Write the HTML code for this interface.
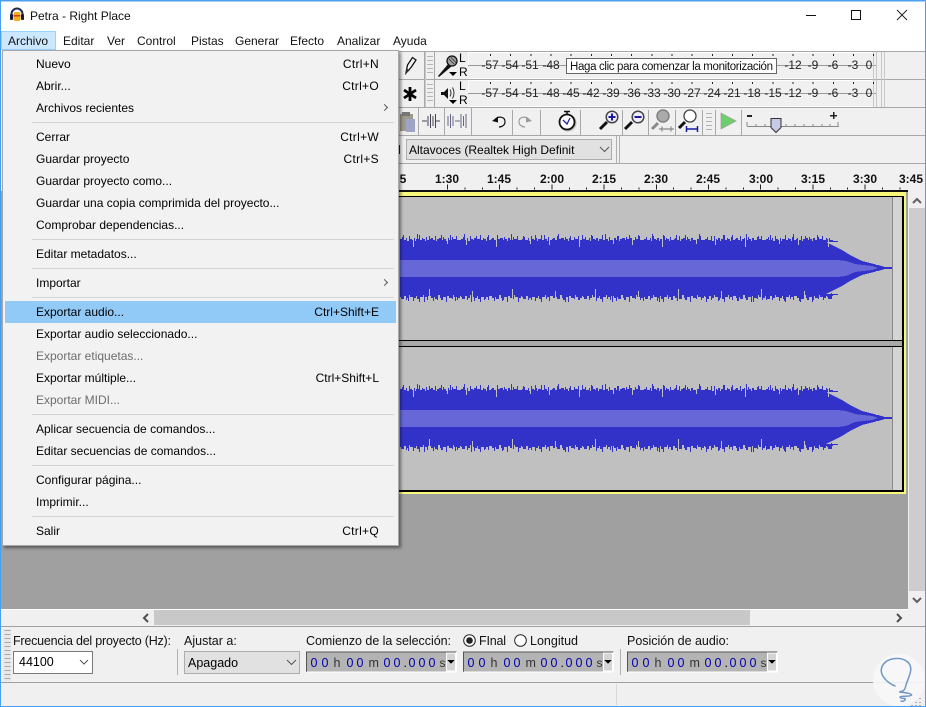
<!DOCTYPE html>
<html lang="es"><head><meta charset="utf-8"><title>Petra - Right Place</title>
<style>
html,body{margin:0;padding:0;background:#f0f0f0}
#w{position:relative;width:926px;height:707px;overflow:hidden;font:12px "Liberation Sans",sans-serif;color:#000}
svg{position:absolute;left:0;top:0}
svg text{font-family:"Liberation Sans",sans-serif}
#m{position:absolute;left:2px;top:50px;width:395px;height:494px;background:#f2f2f2;border:1px solid #a8a8a8;box-shadow:2px 2px 3px rgba(0,0,0,.45)}
#m div{position:absolute;left:1px;width:392px;height:22px;line-height:22px;white-space:nowrap}
#m span{position:absolute;left:32px;top:0}
#m b{position:absolute;right:17px;top:0;font-weight:normal}
#m b.l{letter-spacing:.3px}
#m i{position:absolute;left:29px;width:362px;height:1px;background:#d4d4d4}
#m .g{color:#6d6d6d}
#m .h{background:#91c9f7}
#m u{position:absolute;right:9px;top:8px;width:4px;height:4px;border:solid #555;border-width:1px 1px 0 0;transform:rotate(45deg)}
</style></head><body><div id="w">
<svg width="926" height="707" viewBox="0 0 926 707" shape-rendering="crispEdges">
<defs>
<clipPath id="env"><polygon points="400,-35 815,-35 815,-33 826,-33 826,-30 833,-30 833,-27 838,-27 838,-22 842,-22 842,-18 846,-18 846,-19 849,-19 849,-15 853,-15 853,-13 857,-13 857,-10 861,-10 861,-8 866,-8 866,-7 871,-7 871,-5 876,-5 876,-3 881,-3 881,-2 886,-2 886,-1 892,-1 892,1 886,1 886,2 881,2 881,3 876,3 876,5 871,5 871,7 866,7 866,9 861,9 861,11 857,11 857,14 853,14 853,16 849,16 849,20 846,20 846,18 842,18 842,23 838,23 838,27 833,27 833,31 826,31 826,33 815,33 815,35 400,35"/></clipPath>
<pattern id="pa" patternUnits="userSpaceOnUse" x="400" y="-35" width="61" height="70">
<path fill="#3232c8" d="M0 9V6h2V4h1V7h3V5h1V8h2V3h1V6h2V7h1V5h2V8h1V6h3V2h1V7h2V5h1V6h2V8h1V4h1V7h3V6h1V5h2V7h2V3h1V8h1V6h2V5h3V7h1V4h1V6h2V8h1V5h2V7h3V4h1V6h3V3h1V7h4V9H0Z"/>
<path fill="#3232c8" d="M0 61V64h1V66h3V63h2V67h1V65h2V62h1V64h3V68h1V65h2V63h1V66h2V69h1V64h3V62h1V66h1V64h2V67h1V63h3V65h2V68h1V64h1V66h3V62h2V65h1V67h2V64h3V69h1V63h2V65h3V66h1V62h1V64h3V67h1V65h2V63h1V61H0Z"/>
</pattern>
<pattern id="pb" patternUnits="userSpaceOnUse" x="400" y="-35" width="47" height="70">
<path fill="none" stroke="#3232c8" d="M3.500 2v8M17.500 1v8M29.500 3v7M41.500 2v7M8.500 60v8M24.500 60v9M37.500 60v7"/>
</pattern>
<pattern id="pc" patternUnits="userSpaceOnUse" x="400" y="-35" width="83" height="70">
<path fill="none" stroke="#c0c0c0" d="M13.500 0v14M47.500 0v11M66.500 0v12M29.500 56v14M72.500 58v12"/>
</pattern>
<g id="wave" clip-path="url(#env)">
<polygon fill="#3232c8" points="400,-26 826,-26 832,-23 842,-18 850,-13 856,-10 862,-7 870,-5 878,-3 885,-1 892,-1 892,1 885,1 878,3 870,5 862,7 856,10 850,13 842,18 832,23 826,26 400,26"/>
<rect x="400" y="-35" width="492" height="70" fill="url(#pa)"/>
<rect x="400" y="-35" width="492" height="70" fill="url(#pb)"/>
<rect x="400" y="-35" width="435" height="70" fill="url(#pc)"/>
<polygon fill="#6767d8" points="400,-8 838,-8 846,-7 855,-4 872,-2 878,0 872,2 855,4 846,8 838,9 400,9"/>
<line x1="878" x2="892" y1="0" stroke="#3232c8" stroke-width="1"/>
</g>
<g id="tb">
<rect x="0" y="0" width="150" height="20" fill="#b4b4b4"/>
<path d="M0 20V0H150" fill="none" stroke="#555" stroke-width="1.4"/>
<path d="M150 0V20H0" fill="none" stroke="#fff" stroke-width="1"/>
<rect x="140" y="1" width="9" height="18" fill="#d4d4d4" stroke="#fff" stroke-width=".6"/>
<polygon points="141,8 148,8 144.500,12" fill="#000"/>
<text y="15" font-size="12.500" fill="#0000b0"><tspan x="4 15 40 50 77 87 102 112 122">000000000</tspan></text>
<text y="15" font-size="12.500" fill="#333"><tspan x="27">h</tspan><tspan x="62">m</tspan><tspan x="97" fill="#000">.</tspan><tspan x="133" font-size="12">s</tspan></text>
</g>
</defs>

<rect width="926" height="707" fill="#f0f0f0"/>
<rect x="0" y="0" width="926" height="51" fill="#fff"/>

<!-- tracks -->
<rect x="1" y="191" width="907" height="419" fill="#a0a0a0"/>
<rect x="396" y="192" width="510" height="302" fill="#f8f87a"/>
<rect x="396" y="190" width="512" height="2" fill="#111"/>
<rect x="396" y="196" width="508" height="296" fill="#000"/>
<rect x="396" y="197" width="506" height="143" fill="#c0c0c0"/>
<rect x="396" y="341" width="506" height="5" fill="#a8a8a8"/>
<rect x="396" y="347" width="506" height="143" fill="#c0c0c0"/>
<rect x="892" y="197" width="10" height="143" fill="#d4d4d4"/><rect x="892" y="197" width="1" height="143" fill="#888"/>
<rect x="892" y="347" width="10" height="143" fill="#d4d4d4"/><rect x="892" y="347" width="1" height="143" fill="#888"/>
<use href="#wave" transform="translate(0,268)"/>
<use href="#wave" transform="translate(0,418)"/>

<!-- v scrollbar -->
<rect x="908" y="191" width="17" height="419" fill="#f0f0f0"/>
<rect x="909" y="208" width="16" height="383" fill="#cdcdcd"/>
<path d="M913 203l4-4 4 4M913 598l4 4 4-4" fill="none" stroke="#606060" stroke-width="2" shape-rendering="auto"/>

<!-- h scrollbar -->
<rect x="1" y="609" width="907" height="1" fill="#fff"/>
<rect x="1" y="610" width="924" height="16" fill="#f0f0f0"/>
<rect x="154" y="610" width="596" height="15" fill="#c8c8c8"/>
<path d="M148 614l-4 4 4 4M897 614l4 4-4 4" fill="none" stroke="#505050" stroke-width="2" shape-rendering="auto"/>
<rect x="1" y="626" width="924" height="1" fill="#a0a0a0"/>
<rect x="1" y="682" width="924" height="1" fill="#a0a0a0"/>
<rect x="616" y="684" width="1" height="21" fill="#d8d8d8"/>

<!-- toolbar lines -->
<g fill="#a8a8a8">
<rect x="396" y="51" width="530" height="1"/><rect x="396" y="79" width="530" height="1"/>
<rect x="396" y="107" width="530" height="1"/><rect x="396" y="135" width="530" height="1"/>
<rect x="396" y="163" width="530" height="1"/>
<rect x="424" y="52" width="1" height="55"/>
<rect x="425" y="52" width="1" height="55" fill="#c8c8c8"/><rect x="434" y="52" width="1" height="55"/>
</g>

<!-- grips -->
<g fill="#b4b4b4"><rect x="427" y="56" width="6" height="1"/><rect x="427" y="60" width="6" height="1"/><rect x="427" y="64" width="6" height="1"/><rect x="427" y="68" width="6" height="1"/><rect x="427" y="72" width="6" height="1"/>
<rect x="427" y="84" width="6" height="1"/><rect x="427" y="88" width="6" height="1"/><rect x="427" y="92" width="6" height="1"/><rect x="427" y="96" width="6" height="1"/><rect x="427" y="100" width="6" height="1"/>
<rect x="706" y="113" width="6" height="1"/><rect x="706" y="117" width="6" height="1"/><rect x="706" y="121" width="6" height="1"/><rect x="706" y="125" width="6" height="1"/><rect x="706" y="129" width="6" height="1"/></g>

<g shape-rendering="auto">
<!-- pencil + star -->
<path d="M406 73l1.500-8 5-7.500 3.500 2.500-5 7.500z" fill="#f4f4f4" stroke="#111" stroke-width="1.300"/>
<path d="M406 73l.8-4.500 3 2z" fill="#333"/>
<path d="M410 87v14M404 90l12 8M416 90l-12 8" stroke="#000" stroke-width="2.800" fill="none"/>
<!-- mic -->
<path d="M438 76l11-13 3 3-13 11z" fill="#111"/>
<circle cx="452" cy="61" r="5" fill="#a0a0a0" stroke="#111" stroke-width="1.300"/>
<path d="M449 59l5 5M451 57.500l5 5" stroke="#333" stroke-width=".8"/>
<polygon points="449,72 457,72 453,76" fill="#000"/>
<text x="459" y="62" font-size="12">L</text><text x="459" y="76" font-size="12">R</text>
<!-- speaker -->
<path d="M441 92h3l4-4v11l-4-4h-3z" fill="#111"/>
<path d="M450 89.500q2 3.500 0 7M452.500 87.500q3 5.500 0 11" fill="none" stroke="#333" stroke-width="1"/>
<polygon points="449,100 457,100 453,104" fill="#000"/>
<text x="459" y="90" font-size="12">L</text><text x="459" y="104" font-size="12">R</text>
</g>

<!-- meters -->
<g fill="none">
<path d="M468.500 53V65.500M468.500 81V93.500" stroke="#fff" stroke-width="1"/>
<path d="M468 52.500H873M468 78.500H873M468 80.500H873M468 106.500H873" stroke="#fff"/>
<path d="M468 65.500H876M468 93.500H876" stroke="#9a9a9a"/>
<path d="M873.500 52V107M876.500 52V107M881.500 52V107M884.500 52V107" stroke="#c8c8c8"/>
<path d="M490 55H875M490 83H875" stroke="#222" stroke-width="2" stroke-dasharray="1 19.170"/>
</g>
<g font-size="12" text-anchor="middle" fill="#222">
<text x="490" y="69">-57</text><text x="510" y="69">-54</text><text x="530" y="69">-51</text><text x="551" y="69">-48</text>
<text x="793" y="69">-12</text><text x="813" y="69">-9</text><text x="833" y="69">-6</text><text x="853" y="69">-3</text><text x="869" y="69">0</text>
<text x="490" y="97">-57</text><text x="510" y="97">-54</text><text x="530" y="97">-51</text><text x="551" y="97">-48</text><text x="571" y="97">-45</text><text x="591" y="97">-42</text><text x="611" y="97">-39</text><text x="632" y="97">-36</text><text x="652" y="97">-33</text><text x="672" y="97">-30</text><text x="692" y="97">-27</text><text x="712" y="97">-24</text><text x="732" y="97">-21</text><text x="752" y="97">-18</text><text x="773" y="97">-15</text><text x="793" y="97">-12</text><text x="813" y="97">-9</text><text x="833" y="97">-6</text><text x="853" y="97">-3</text><text x="869" y="97">0</text>
</g>
<rect x="566.500" y="58.500" width="210" height="15" fill="#fff" stroke="#666"/>
<text x="570" y="70" font-size="11.500" fill="#111" textLength="203">Haga clic para comenzar la monitorización</text>

<!-- row 3 buttons -->
<g fill="#a8a8a8">
<rect x="418" y="108" width="1" height="27"/><rect x="444" y="108" width="1" height="27"/><rect x="471" y="108" width="1" height="27"/>
<rect x="512" y="110" width="1" height="25"/><rect x="540" y="110" width="1" height="25"/><rect x="580" y="110" width="1" height="25"/>
<rect x="622" y="110" width="1" height="25"/><rect x="648" y="110" width="1" height="25"/><rect x="675" y="110" width="1" height="25"/><rect x="702" y="110" width="1" height="25"/>
<rect x="715" y="110" width="1" height="25"/><rect x="741" y="110" width="1" height="25"/>
</g>
<g shape-rendering="auto">
<rect x="400" y="114" width="13" height="17" fill="#a09a8c"/><rect x="402" y="112" width="8" height="4" fill="#777"/><rect x="406" y="119" width="9" height="13" fill="#9fa3c4"/>
<path d="M422 121h5M440 121h-4M428 116v10M430.500 114v14M433 116v10M435.500 114v14" stroke="#445" stroke-width="1" fill="none"/>
<path d="M448 116v10M450.500 114v14M453 116v10M455 121h5M461 114v14M463.500 116v10M466 114v14" stroke="#668" stroke-width="1" fill="none"/>
<path d="M495 119.500C498 116 505 116 505 122C505 125 502 127 499 127" fill="none" stroke="#111" stroke-width="1.200"/><path d="M492 121l6-4.500v6z" fill="#111"/>
<path d="M529 119.500C526 116 519 116 519 122C519 125 522 127 525 127" fill="none" stroke="#9a9a9a" stroke-width="1.200"/><path d="M532 121l-6-4.500v6z" fill="#9a9a9a"/>
<circle cx="568" cy="123" r="8.500" fill="#888" opacity=".5"/>
<circle cx="567" cy="122" r="7.500" fill="#fff" stroke="#111" stroke-width="1.800"/>
<path d="M564 111.500h6M567 112v3" stroke="#111" stroke-width="1.500"/>
<path d="M563 120l4 4 3-6" fill="none" stroke="#2222a8" stroke-width="1.300"/>
<!-- zoom -->
<path d="M607 122l-7 7" stroke="#111" stroke-width="3"/><circle cx="612" cy="117" r="5.800" fill="#eef" stroke="#444" stroke-width="1.500"/><path d="M608.500 117h7M612 113.500v7" stroke="#1a1aa0" stroke-width="2"/>
<path d="M632 122l-7 7" stroke="#111" stroke-width="3"/><circle cx="638" cy="117" r="5.800" fill="#eef" stroke="#444" stroke-width="1.500"/><path d="M634.500 117h7" stroke="#1a1aa0" stroke-width="2"/>
<path d="M658 123l-6 6" stroke="#8a8a8a" stroke-width="3"/><circle cx="663" cy="116" r="6" fill="#aaa" stroke="#808080" stroke-width="1.500"/>
<path d="M659 129h15M662 126.500v5M671 126.500v5" stroke="#888" stroke-width="1.200" fill="none"/>
<path d="M685 122l-6 6" stroke="#111" stroke-width="3"/><circle cx="690" cy="116" r="6" fill="#fff" stroke="#444" stroke-width="1.300"/>
<path d="M686 129h12M686.500 126v6M697.500 126v6" stroke="#1a1aa0" stroke-width="1.500" fill="none"/>
<polygon points="721,113 736,121 721,129" fill="#6ccf6c" stroke="#9a9a9a" stroke-width=".7"/>
</g>
<!-- slider -->
<g fill="#222"><rect x="747" y="115" width="5" height="2"/><rect x="830" y="115" width="7" height="1.500"/><rect x="833" y="112" width="1.500" height="7"/></g>
<rect x="747" y="126" width="92" height="1" fill="#888"/>
<path d="M747 122V126M756 124V126M765 124V126M786 124V126M795 124V126M804 124V126M813 124V126M822 124V126M830 124V126M838 122V126" stroke="#888" fill="none"/>
<path d="M771 118.500h10v9l-5 5-5-5z" fill="#c7c9e6" stroke="#333" shape-rendering="auto"/>

<!-- row 4 -->
<rect x="406.500" y="139.500" width="205" height="20" fill="#e1e1e1" stroke="#adadad"/>
<rect x="399" y="145" width="1" height="9" fill="#222"/>
<text x="409" y="154" font-size="12">Altavoces (Realtek High Definit</text>
<path d="M600 147l4.500 4.500 4.500-4.500" fill="none" stroke="#555" shape-rendering="auto"/>
<path d="M616.500 136V163M619.500 136V163" stroke="#b0b0b0"/>

<!-- ruler -->
<g font-size="12" font-weight="bold" text-anchor="middle" fill="#111">
<text x="403" y="183">5</text><text x="447" y="183">1:30</text><text x="499" y="183">1:45</text><text x="552" y="183">2:00</text><text x="604" y="183">2:15</text><text x="656" y="183">2:30</text><text x="708" y="183">2:45</text><text x="761" y="183">3:00</text><text x="813" y="183">3:15</text><text x="865" y="183">3:30</text><text x="911" y="183">3:45</text>
</g>
<path d="M447 188.500H906" stroke="#222" stroke-width="2" stroke-dasharray="1 16.400" fill="none"/>
<path d="M447 187H906" stroke="#222" stroke-width="5" stroke-dasharray="1 51.200" fill="none"/>

<!-- bottom bar -->
<rect x="3" y="629" width="8" height="52" fill="#e8e8e8"/>
<path d="M7.500 630V680" stroke="#a8a8a8" stroke-width="6" stroke-dasharray="1 3" fill="none"/>
<rect x="177" y="649" width="1" height="26" fill="#b0b0b0"/>
<rect x="620" y="649" width="1" height="26" fill="#b0b0b0"/>
<g font-size="12.500" fill="#111">
<text x="13" y="645" textLength="158">Frecuencia del proyecto (Hz):</text>
<text x="184" y="645">Ajustar a:</text>
<text x="306" y="645" textLength="145">Comienzo de la selección:</text>
<text x="479" y="645" textLength="27">FInal</text>
<text x="530" y="645" textLength="48">Longitud</text>
<text x="627" y="645" textLength="102">Posición de audio:</text>
</g>
<rect x="13.500" y="651.500" width="79" height="22" fill="#fff" stroke="#7a7a7a"/>
<text x="19" y="666" font-size="12.500">44100</text>
<path d="M80 660l4 4 4-4" fill="none" stroke="#555" shape-rendering="auto"/>
<rect x="184.500" y="651.500" width="115" height="22" fill="#e1e1e1" stroke="#adadad"/>
<text x="188" y="667" font-size="12.500">Apagado</text>
<path d="M287 660l4.500 4.500 4.500-4.500" fill="none" stroke="#555" shape-rendering="auto"/>
<use href="#tb" transform="translate(306.500,652)"/>
<use href="#tb" transform="translate(463.500,652)"/>
<use href="#tb" transform="translate(627.500,652)"/>
<g shape-rendering="auto">
<circle cx="469.500" cy="640.500" r="5.800" fill="#fff" stroke="#222"/><circle cx="469.500" cy="640.500" r="3.300" fill="#222"/>
<circle cx="520.500" cy="640.500" r="5.800" fill="#fff" stroke="#222"/>
</g>

<!-- title bar -->
<g shape-rendering="auto">
<path d="M11.500 17v-3a5.500 5.500 0 0 1 11 0v3" fill="none" stroke="#222a55" stroke-width="2"/>
<rect x="10" y="14" width="3" height="6" rx="1" fill="#1a1a3a"/><rect x="21" y="14" width="3" height="6" rx="1" fill="#1a1a3a"/>
<rect x="13.500" y="12" width="7" height="9" rx="2" fill="#f2b01e"/><rect x="13.500" y="15" width="7" height="1.500" fill="#d04020"/>
</g>
<text x="30" y="20" font-size="12" fill="#111">Petra - Right Place</text>
<rect x="806" y="15" width="10" height="1" fill="#111"/>
<rect x="851.500" y="10.500" width="9" height="9" fill="none" stroke="#111"/>
<path d="M897 10l10 10M907 10l-10 10" stroke="#222" shape-rendering="auto"/>

<!-- menu bar -->
<rect x="1.500" y="31.500" width="54" height="18" fill="#cce8ff" stroke="#99d1ff"/>
<g font-size="12" fill="#111">
<text x="8" y="45">Archivo</text><text x="63" y="45">Editar</text><text x="107" y="45">Ver</text><text x="137" y="45">Control</text><text x="191" y="45">Pistas</text><text x="235" y="45">Generar</text><text x="290" y="45">Efecto</text><text x="337" y="45">Analizar</text><text x="393" y="45">Ayuda</text>
</g>

<!-- window frame -->
<rect x="0" y="0" width="926" height="1.500" fill="#4aa0ec"/>
<rect x="0" y="0" width="1" height="707" fill="#4aa0ec"/>
<rect x="925" y="0" width="1" height="707" fill="#4aa0ec"/>
<rect x="0" y="706" width="926" height="1" fill="#4aa0ec"/>

<!-- watermark -->
<g shape-rendering="auto">
<circle cx="899" cy="680" r="26" fill="#f7f7f7" opacity=".9"/>
<g transform="translate(840,640) scale(.3333)" fill="none" stroke="#6f97c9" stroke-width="4.500" stroke-linecap="round">
<path d="M165 138C135 125 116 100 127 78C140 52 185 48 205 68C222 85 205 112 198 135C195 148 193 150 190 152L178 156C195 158 215 160 215 165C210 172 180 166 180 172C185 178 200 172 195 180C190 185 185 185 183 183"/>
</g>
</g>
<path d="M920 698v1M916 702v1M920 702v1M912 705v1M916 705v1M920 705v1" stroke="#b0b0b0" stroke-width="2"/>
</svg>

<div id="m">
<div style="top:2px"><span>Nuevo</span><b class="l">Ctrl+N</b></div>
<div style="top:24px"><span>Abrir...</span><b class="l">Ctrl+O</b></div>
<div style="top:46px"><span>Archivos recientes</span><u></u></div>
<i style="top:71px"></i>
<div style="top:75px"><span>Cerrar</span><b class="l">Ctrl+W</b></div>
<div style="top:97px"><span>Guardar proyecto</span><b class="l">Ctrl+S</b></div>
<div style="top:119px"><span>Guardar proyecto como...</span></div>
<div style="top:141px"><span>Guardar una copia comprimida del proyecto...</span></div>
<div style="top:163px"><span>Comprobar dependencias...</span></div>
<i style="top:188px"></i>
<div style="top:192px"><span>Editar metadatos...</span></div>
<i style="top:217px"></i>
<div style="top:221px"><span>Importar</span><u></u></div>
<i style="top:246px"></i>
<div class="h" style="top:250px;left:2px;width:391px"><span style="left:31px">Exportar audio...</span><b>Ctrl+Shift+E</b></div>
<div style="top:272px"><span>Exportar audio seleccionado...</span></div>
<div class="g" style="top:294px"><span>Exportar etiquetas...</span></div>
<div style="top:316px"><span>Exportar múltiple...</span><b>Ctrl+Shift+L</b></div>
<div class="g" style="top:338px"><span>Exportar MIDI...</span></div>
<i style="top:363px"></i>
<div style="top:367px"><span>Aplicar secuencia de comandos...</span></div>
<div style="top:389px"><span>Editar secuencias de comandos...</span></div>
<i style="top:414px"></i>
<div style="top:418px"><span>Configurar página...</span></div>
<div style="top:440px"><span>Imprimir...</span></div>
<i style="top:465px"></i>
<div style="top:469px"><span>Salir</span><b class="l">Ctrl+Q</b></div>
</div>
</div></body></html>
